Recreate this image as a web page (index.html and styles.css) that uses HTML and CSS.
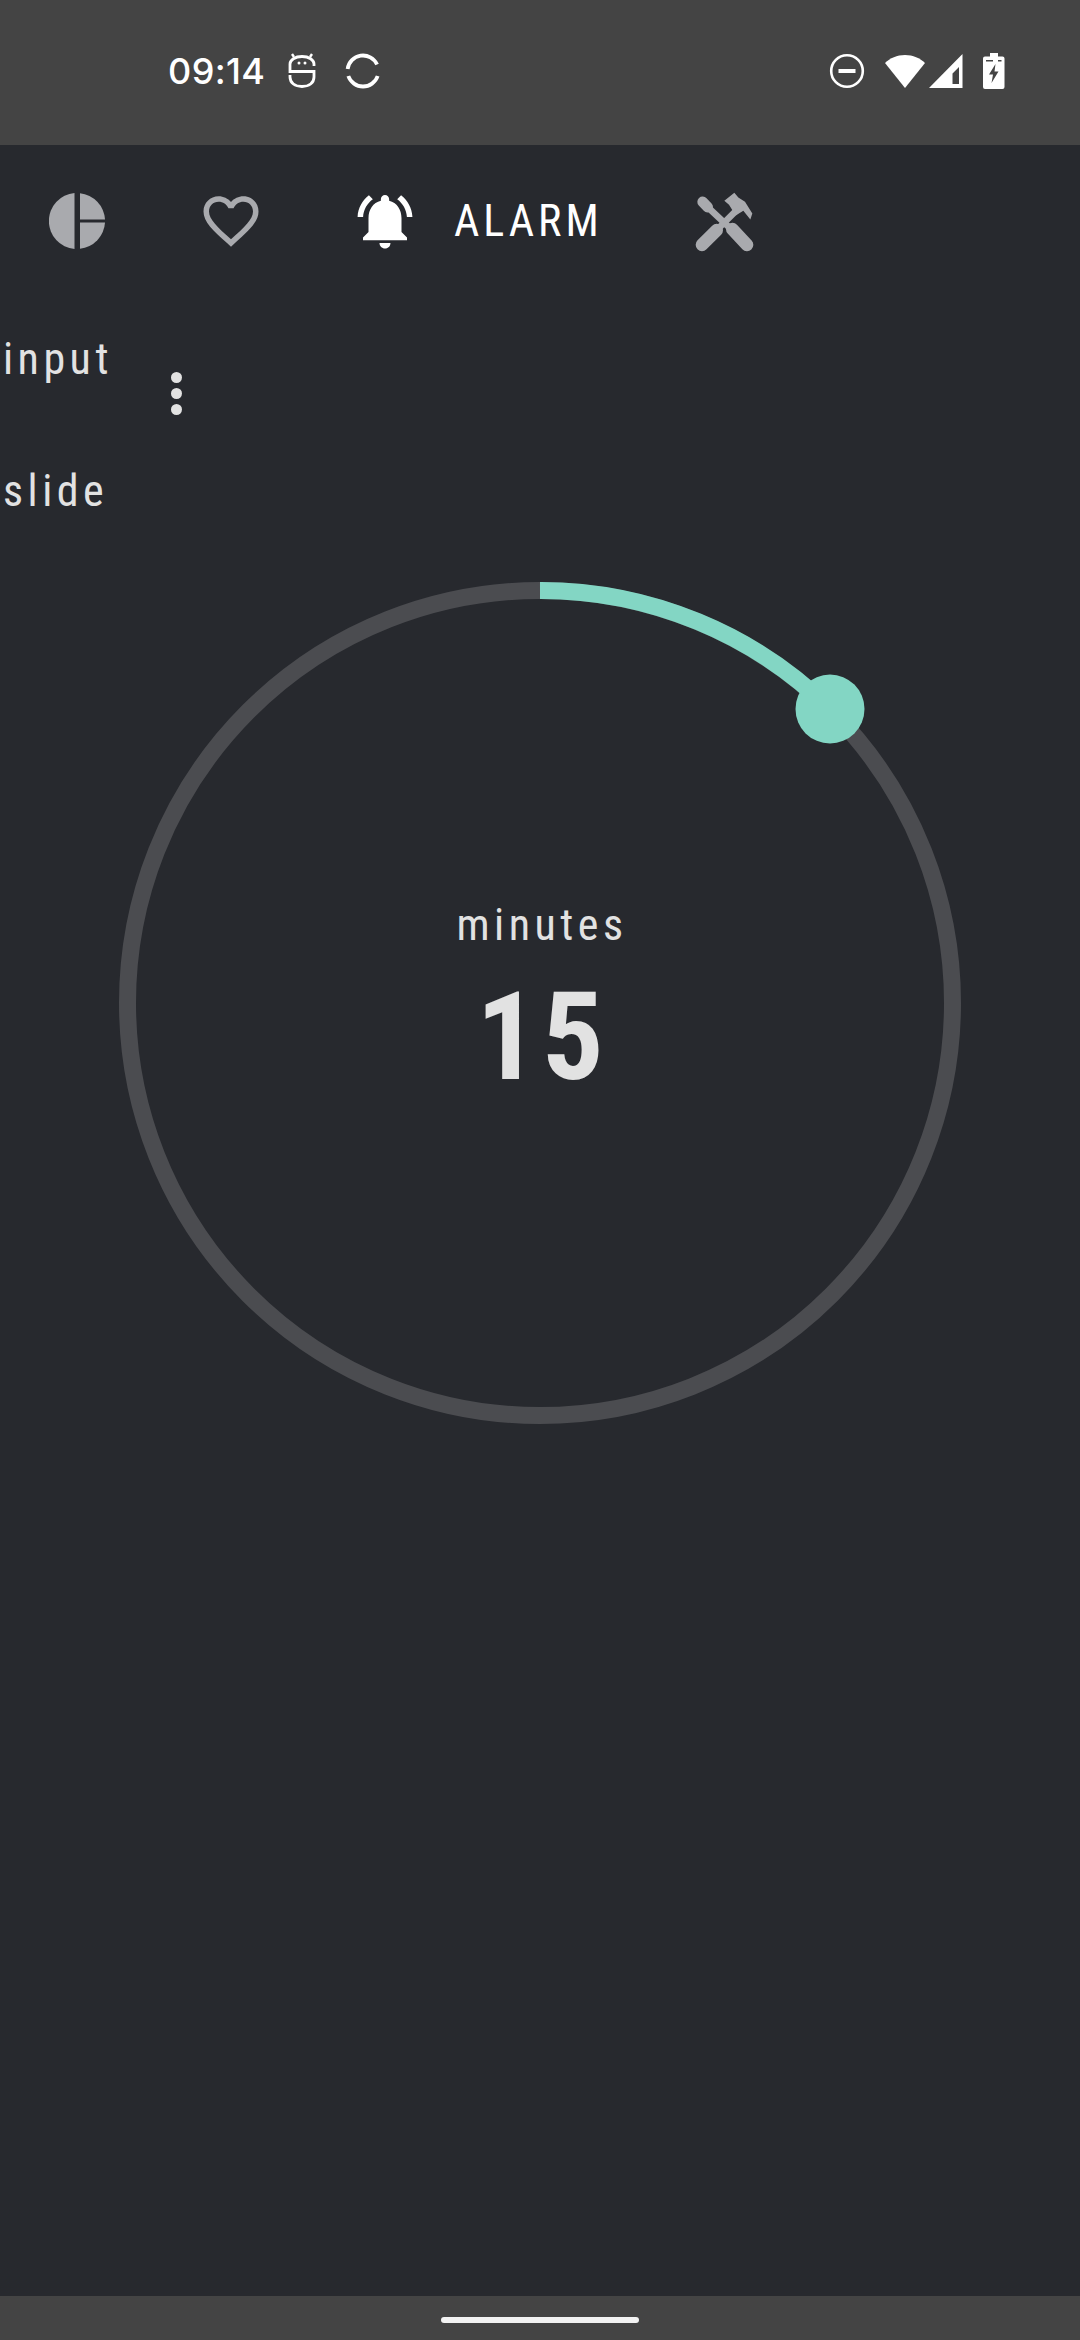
FILE: index.html
```html
<!DOCTYPE html>
<html lang="en">
<head>
  <meta charset="UTF-8">
  <meta name="viewport" content="width=device-width, initial-scale=1.0">
  <title>Alarm</title>
  <link rel="stylesheet" href="styles.css">
</head>
<body>
  <div class="status-bar">
    <div class="status-left">
      <span class="clock">09:14</span>
      <svg class="ic-bot" viewBox="0 0 28 35" fill="none" stroke="#fff" stroke-width="2.8">
        <path d="M26 13V11C26 7 21 3.500 14 3.500S2 7 2 11V18.500H26V24C26 30 21 33.500 14 33.500S2 30 2 24V22"/>
        <path d="M4 1L6 4M24 1L22 4" stroke-width="2.4"/>
        <circle cx="11" cy="10" r="1.5" fill="#fff" stroke="none"/>
        <circle cx="17" cy="10" r="1.5" fill="#fff" stroke="none"/>
      </svg>
      <svg class="ic-sync" viewBox="0 0 36 36" fill="none" stroke="#fff" stroke-width="3.8">
        <path d="M2.630 16A15.500 15.500 0 0 1 32.070 11.500"/>
        <path d="M3.330 23A15.500 15.500 0 0 0 32.670 23"/>
      </svg>
    </div>
    <div class="status-right">
      <svg class="ic-dnd" viewBox="0 0 36 36">
        <circle cx="18" cy="18" r="15.8" fill="none" stroke="#fff" stroke-width="2.6"/>
        <rect x="9.5" y="16" width="17" height="4" fill="#fff"/>
      </svg>
      <svg class="ic-wifi" viewBox="0 0 42 36">
        <path d="M21 35L1 10C6 5 13 2 21 2S36 5 41 10Z" fill="#fff"/>
      </svg>
      <svg class="ic-signal" viewBox="0 0 34 34">
        <path d="M0 34L33.5 0V34ZM23.5 30H30V13L23.5 19.500Z" fill="#fff" fill-rule="evenodd"/>
      </svg>
      <svg class="ic-battery" viewBox="0 0 22 36">
        <path d="M7 0H15V3.500H19.500Q21.500 3.500 21.500 5.500V34Q21.500 36 19.500 36H2Q0 36 0 34V5.500Q0 3.500 2 3.500H7Z" fill="#fff"/>
        <path d="M12.500 11L6 21.500H10L8.500 30L15.500 18.500H11.500Z" fill="#444"/>
        <rect x="3" y="7" width="7" height="1.500" fill="#444"/>
        <rect x="15" y="7" width="3.500" height="1.500" fill="#444"/>
      </svg>
    </div>
  </div>

  <nav class="tabs">
    <svg class="tab-icon ic-pie" viewBox="0 0 56 56" fill="#a9aaae">
      <path d="M25.500 .1V55.900A28 28 0 0 1 25.500 .1Z"/>
      <path d="M31 .2A28 28 0 0 1 56 26.500H31Z"/>
      <path d="M31 29.500H56A28 28 0 0 1 31 55.800Z"/>
    </svg>
    <svg class="tab-icon ic-heart" viewBox="0 0 24 24" fill="#a9aaae">
      <path d="M16.5 3c-1.74 0-3.41.81-4.5 2.09C10.91 3.81 9.24 3 7.5 3 4.42 3 2 5.42 2 8.5c0 3.78 3.4 6.86 8.55 11.54L12 21.35l1.45-1.32C18.6 15.36 22 12.28 22 8.5 22 5.42 19.58 3 16.5 3zm-4.4 15.55l-.1.1-.1-.1C7.14 14.24 4 11.39 4 8.5 4 6.5 5.5 5 7.5 5c1.54 0 3.04.99 3.57 2.36h1.87C13.46 5.99 14.96 5 16.5 5c2 0 3.5 1.5 3.5 3.5 0 2.89-3.14 5.74-7.9 10.05z"/>
    </svg>
    <div class="tab-active">
      <svg class="tab-icon ic-bell" viewBox="0 0 24 24" fill="#fff">
        <path d="M7.58 4.08L6.15 2.65C3.75 4.48 2.17 7.3 2.03 10.5h2c.15-2.65 1.51-4.97 3.55-6.42zm12.39 6.42h2c-.15-3.2-1.73-6.02-4.12-7.85l-1.42 1.43c2.02 1.45 3.39 3.77 3.54 6.42zM18 11c0-3.07-1.64-5.64-4.5-6.32V4c0-.83-.67-1.5-1.5-1.5s-1.5.67-1.5 1.5v.68C7.63 5.36 6 7.92 6 11v5l-2 2v1h16v-1l-2-2v-5zm-6 11c.14 0 .27-.01.4-.04.65-.14 1.18-.58 1.44-1.18.1-.24.15-.5.15-.78h-4c.01 1.1.9 2 2.01 2z"/>
      </svg>
      <span class="tab-label">ALARM</span>
    </div>
    <svg class="tab-icon ic-tools" viewBox="1060 60 180 185" fill="none" stroke="#a9aaae" stroke-linecap="round" stroke-linejoin="round">
      <path d="M1083 95L1098 111" stroke-width="32"/>
      <path d="M1095 108L1165 174" stroke-width="20" stroke-linecap="butt"/>
      <path d="M1172 177L1216 224" stroke-width="38"/>
      <path d="M1081 224L1125 180" stroke-width="38"/>
      <path d="M1118 187L1190 115" stroke-width="20" stroke-linecap="butt"/>
      <path d="M1148 92L1178 68L1190 82L1210 95L1232 130L1226 148L1205 122L1182 136L1162 104Z" fill="#a9aaae" stroke="none"/>
    </svg>
  </nav>

  <section class="side">
    <div class="side-list">
      <span class="side-item">input</span>
      <span class="side-item">slide</span>
    </div>
    <div class="dots"><i></i><i></i><i></i></div>
  </section>

  <section class="dial">
    <svg class="dial-ring" viewBox="0 0 842 842" fill="none" stroke-width="17">
      <circle cx="421" cy="421" r="412.500" stroke="#4b4c50"/>
      <path d="M421 8.500A412.500 412.500 0 0 1 713 129" stroke="#83d6c4"/>
      <circle cx="711" cy="127" r="34.500" fill="#83d6c4" stroke="none"/>
    </svg>
    <div class="dial-text">
      <span class="dial-unit">minutes</span>
      <span class="dial-value">15</span>
    </div>
  </section>

  <div class="nav-bar"><span class="home-pill"></span></div>
</body>
</html>
```

FILE: styles.css
```css
body {
  display: flex;
  flex-direction: column;
  width: 1080px;
  height: 2340px;
  margin: 0;
  overflow: hidden;
  background-color: #27292e;
  color: #e2e2e2;
  font-family: Roboto, sans-serif;
}

svg {
  display: block;
  flex: none;
}

.status-bar {
  display: flex;
  justify-content: space-between;
  align-items: center;
  height: 145px;
  padding: 0 75px 4px 168px;
  box-sizing: border-box;
  background-color: #444;
}

.status-left, .status-right {
  display: flex;
  align-items: center;
}

.clock {
  width: 120px;
  color: #fff;
  font-family: Inter, sans-serif;
  font-size: 36px;
  font-weight: 500;
  letter-spacing: .4px;
  line-height: 36px;
}

.ic-bot { width: 28px; height: 35px; }
.ic-sync { width: 36px; height: 36px; margin-left: 29px; }
.ic-dnd { width: 36px; height: 36px; }
.ic-wifi { width: 42px; height: 36px; margin-left: 19px; }
.ic-signal { width: 34px; height: 34px; margin-left: 3px; }
.ic-battery { width: 22px; height: 36px; margin-left: 20px; }

.tabs {
  display: flex;
  align-items: center;
  height: 152px;
  padding-left: 49px;
}

.tab-active {
  display: flex;
  align-items: center;
}

.tab-icon {
  width: 66px;
  height: 66px;
}

.ic-pie { width: 56px; height: 56px; }
.ic-heart { margin-left: 93px; }
.tab-active { margin-left: 88px; }
.ic-tools { width: 60px; height: 62px; margin-left: 92px; }

.tab-label {
  margin-left: 36px;
  color: #fff;
  font-size: 44px;
  font-weight: 400;
  font-stretch: 75%;
  letter-spacing: 4px;
}

.side {
  display: flex;
  align-items: flex-start;
  margin-top: -4px;
  padding-left: 3px;
}

.side-list {
  display: flex;
  flex-direction: column;
  width: 168px;
}

.side-item {
  height: 132px;
  font-size: 44px;
  font-weight: 400;
  font-stretch: 75%;
  letter-spacing: 4.5px;
  line-height: 132px;
}

.dots {
  display: flex;
  flex-direction: column;
  gap: 5px;
  margin-top: 79px;
}

.dots i {
  width: 11px;
  height: 11px;
  border-radius: 50%;
  background-color: #e2e2e2;
}

.dial {
  display: grid;
  justify-content: center;
  margin-top: 25px;
}

.dial-ring {
  grid-area: 1 / 1;
  width: 842px;
  height: 842px;
}

.dial-text {
  grid-area: 1 / 1;
  display: flex;
  flex-direction: column;
  align-items: center;
  gap: 15px;
  padding-top: 317px;
  padding-left: 4px;
}

.dial-unit {
  font-size: 44px;
  font-weight: 400;
  font-stretch: 75%;
  letter-spacing: 4.5px;
}

.dial-value {
  font-size: 122px;
  font-weight: 700;
  font-stretch: 75%;
  letter-spacing: 4px;
}

.nav-bar {
  display: flex;
  justify-content: center;
  align-items: flex-start;
  height: 44px;
  margin-top: auto;
  padding-top: 21px;
  box-sizing: border-box;
  background-color: #444;
}

.home-pill {
  width: 198px;
  height: 6px;
  border-radius: 3px;
  background-color: #f2f2f2;
}
```
